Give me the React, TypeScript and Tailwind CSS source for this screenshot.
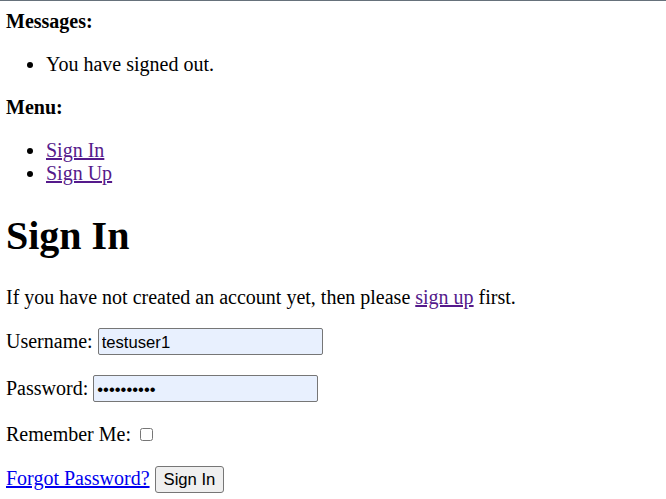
import React from "react";

const App = () => {
  return (
    <div className="min-h-[499px] border-t border-[#66717b] bg-white pl-[6px] pr-2 pt-[9px] font-['Liberation_Serif',serif] text-[20px] leading-[23px] text-black">
      <strong className="font-bold">Messages:</strong>
      <ul className="my-5 list-disc pl-10">
        <li>You have signed out.</li>
      </ul>

      <strong className="font-bold">Menu:</strong>
      <ul className="my-5 list-disc pl-10">
        <li>
          <a href="#" className="text-[#551a8b] underline">Sign In</a>
        </li>
        <li>
          <a href="#" className="text-[#551a8b] underline">Sign Up</a>
        </li>
      </ul>

      <h1 className="mb-[27px] mt-[28px] text-[40px] leading-[46px] font-bold">Sign In</h1>

      <p className="mb-[19px] mt-5">
        If you have not created an account yet, then please{" "}
        <a href="#" className="text-[#551a8b] underline">sign up</a> first.
      </p>

      <form onSubmit={(e) => e.preventDefault()}>
        <p className="mb-5 mt-[19px]">
          <label htmlFor="id_login">Username:</label>{" "}
          <input
            id="id_login"
            type="text"
            defaultValue="testuser1"
            className="h-[27px] w-[225px] rounded-[2px] border border-[#767676] bg-[#e8f0fe] px-[3px] pb-[1px] pt-[4px] align-baseline font-['Liberation_Sans',sans-serif] text-[16.67px] text-black"
          />
        </p>
        <p className="my-5">
          <label htmlFor="id_password">Password:</label>{" "}
          <input
            id="id_password"
            type="password"
            defaultValue="secretpass"
            className="h-[27px] w-[225px] rounded-[2px] border border-[#767676] bg-[#e8f0fe] px-[3px] pb-[1px] pt-[4px] align-baseline font-['Liberation_Sans',sans-serif] text-[16.67px] text-black"
          />
        </p>
        <p className="mb-5 mt-[21px]">
          <label htmlFor="id_remember">Remember Me:</label>{" "}
          <input id="id_remember" type="checkbox" className="mb-[3px] ml-1 mr-[3px] mt-[3px] h-[13px] w-[13px] align-baseline" />
        </p>
        <p className="my-5">
          <a href="#" className="text-[#0000ee] underline">Forgot Password?</a>{" "}
          <button
            type="submit"
            className="h-[27px] rounded-[3px] border border-[#767676] bg-[#efefef] px-[8px] font-['Liberation_Sans',sans-serif] text-[16.67px] text-black"
          >
            Sign In
          </button>
        </p>
      </form>
    </div>
  );
};

export default App;
